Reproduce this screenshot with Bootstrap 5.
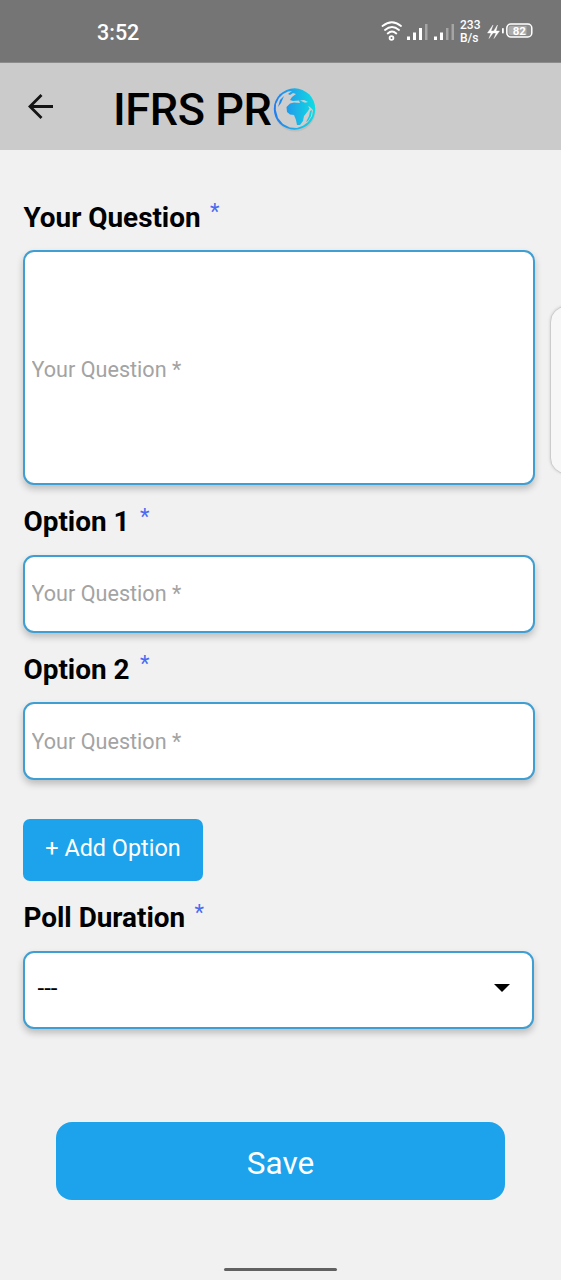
<!DOCTYPE html>
<html lang="en">
<head>
<meta charset="utf-8">
<meta name="viewport" content="width=device-width, initial-scale=1">
<title>IFRS PRO</title>
<link href="https://cdn.jsdelivr.net/npm/bootstrap@5.3.0/dist/css/bootstrap.min.css" rel="stylesheet">
<style>
  body { font-family: Roboto, "Liberation Sans", sans-serif; background: #f1f1f1; color: #000; height: 1280px; overflow: hidden; }
  .status-bar { height: 63px; background: #757575; color: #fff; padding: 0 28px 0 97px; border-bottom: 1px solid #8c8c8c; }
  .clock { font-size: 21.5px; font-weight: 500; line-height: 63px; padding-top: 2px; }
  .net-speed { font-size: 12px; font-weight: 500; line-height: 12.5px; width: 22px; margin-left: 5px; padding-top: 1px; }
  .app-bar { height: 87px; background: #cbcbcb; padding-left: 28px; }
  .app-title { font-size: 45px; font-weight: 500; line-height: 87px; margin: 0 0 0 59px; padding-top: 6px; letter-spacing: -.4px; white-space: nowrap; }
  .globe { margin-top: 7px; }
  .field-label { height: 69.5px; font-size: 27.9px; font-weight: 700; padding: 5px 0 0 .5px; letter-spacing: -.02px; }
  .req { color: #4a6cf0; font-weight: 400; font-size: 22px; margin-left: 9.5px; margin-top: -12px; }
  .req.wide { margin-left: 10.5px; }
  .poll-form { padding: 30.5px 26px 0 23px; }
  .field-box, .field-box:focus { height: 78px; border: 2px solid #3f9fd3; border-radius: 11px; background-color: #fff; box-shadow: 0 4px 7px rgba(0,0,0,.22); font-size: 21.6px; padding: 0 6.5px; }
  .field-box.tall { height: 235px; padding-top: 4px; }
  .field-box::placeholder { color: #a3a3a3; opacity: 1; }
  .duration { width: 511px; font-size: 24px; padding: 0 22.5px 3px 12.5px; }
  .btn-sky, .btn-sky:hover { background: #1ca3ec; color: #fff; border: 0; }
  .add-btn { width: 180px; height: 62px; margin-top: 39px; border-radius: 7px; font-size: 23.4px; padding: 0 0 2px; }
  .save-btn { width: 449px; height: 78px; margin: 93px 0 0 33px; border-radius: 16px; font-size: 31.5px; padding: 6px 0 0; }
  .edge-panel { right: -21px; top: 306px; width: 32px; height: 168px; border-radius: 22px; background: #f7f7f7; border: 1px solid #ccc; box-shadow: 0 0 3px rgba(0,0,0,.15); }
  .home-pill { width: 113px; height: 3px; margin: 68px auto 0; border-radius: 2px; background: #616161; }
</style>
</head>
<body class="position-relative">
<header>
  <div class="status-bar d-flex align-items-center justify-content-between">
    <span class="clock">3:52</span>
    <div class="d-flex align-items-center">
      <svg width="22" height="22" viewBox="0 0 22 22" fill="none" stroke="#fff" stroke-width="1.8" stroke-linecap="round"><path d="M1.5 6Q11-1.500 20 6M4 10Q11 4 18 10M6.700 13.500Q11 9.500 15.300 13.500"/><circle cx="10.500" cy="18" r="1.900"/></svg>
      <svg class="ms-1" width="48" height="18" viewBox="0 0 48 18" fill="#fff"><rect x="0" y="14.500" width="3" height="3.500"/><rect x="6" y="10.500" width="3" height="7.500"/><rect x="12" y="6" width="3" height="12"/><rect x="18" y="2" width="2.500" height="16" opacity=".35"/><rect x="27" y="14.500" width="3" height="3.500"/><rect x="33" y="10.500" width="3" height="7.500"/><rect x="39" y="6" width="2.500" height="12" opacity=".35"/><rect x="44.500" y="2" width="2.500" height="16" opacity=".35"/></svg>
      <span class="net-speed">233<br>B/s</span>
      <svg class="ms-1" width="47" height="18" viewBox="0 0 47 18"><path d="M7 3 1.500 11h3.500L3 16.500 8.500 9H5zM11.500 3 6.500 11H10L8 16.500 13.500 9H10z" fill="#fff" stroke="#fff" stroke-width=".4"/><rect x="16" y="6" width="1.800" height="5.500" rx=".8" fill="#fff"/><rect x="20.800" y="2" width="25" height="13" rx="4" fill="#8b8b8b" stroke="#fff" stroke-width="1.500"/><path d="M24.500 4h16v9h-16a2 2 0 0 1-2-2V6a2 2 0 0 1 2-2z" fill="#aaa"/><text x="33.300" y="12.500" font-size="11.500" font-weight="700" text-anchor="middle" fill="#fff">82</text></svg>
    </div>
  </div>
  <nav class="app-bar d-flex align-items-center">
    <svg width="26" height="26" viewBox="0 0 26 26" fill="none" stroke="#151515" stroke-width="2.800"><path d="M25 12.500H2M13.500 1 2 12.500 13.500 24"/></svg>
    <h1 class="app-title">IFRS PR</h1>
    <svg class="globe" width="46" height="46" viewBox="0 0 46 46">
      <defs><linearGradient id="sea" gradientUnits="userSpaceOnUse" x1="2" y1="0" x2="44" y2="0"><stop stop-color="#207cf2"/><stop offset=".5" stop-color="#1caee8"/><stop offset="1" stop-color="#0ce0e3"/></linearGradient></defs>
      <circle cx="23" cy="24" r="20.500" fill="#999" opacity=".25"/>
      <circle cx="22.500" cy="22" r="20.700" fill="url(#sea)"/>
      <path fill="#cecece" d="M4 17 7 11 11 7 16 4.500 20 4 16 7 18 8 21 6 24 7 20 10 18 13 21 14 27 13.500 28 16 22 15.500 18 16.500 14.500 20 15 25 18 27.500 22 28 24 33 25 38 28 38 31 34 32 29 36 24 37.500 21.500 36 19 38 20 41 23 40 29 36 35 31 38.800 25 41 18 40.500 11 37 6 31 3.800 23z"/>
      <path fill="#cecece" d="M28 13.500l4-.5 4 2-3 .8z"/>
      <path fill="url(#sea)" d="M8 13l4-4-3 7-3 4zM38 24l2-1-1 6-3 5-2 1 3-6z"/>
    </svg>
  </nav>
</header>
<main>
  <form class="poll-form">
    <label class="field-label d-flex align-items-center" for="question">Your Question<span class="req">*</span></label>
    <input id="question" class="form-control field-box tall" placeholder="Your Question *">
    <label class="field-label d-flex align-items-center" for="opt1">Option 1<span class="req wide">*</span></label>
    <input id="opt1" class="form-control field-box" placeholder="Your Question *">
    <label class="field-label d-flex align-items-center" for="opt2">Option 2<span class="req wide">*</span></label>
    <input id="opt2" class="form-control field-box" placeholder="Your Question *">
    <button type="button" class="btn btn-sky add-btn d-block">+ Add Option</button>
    <div class="field-label d-flex align-items-center">Poll Duration<span class="req">*</span></div>
    <div class="field-box duration d-flex align-items-center justify-content-between" role="button">
      <span>---</span>
      <svg width="16" height="8" viewBox="0 0 16 8"><path d="M0 0h16L8 8z"/></svg>
    </div>
    <button type="button" class="btn btn-sky save-btn d-block">Save</button>
  </form>
  <div class="home-pill"></div>
</main>
<div class="edge-panel position-absolute"></div>
<script src="https://cdn.jsdelivr.net/npm/bootstrap@5.3.0/dist/js/bootstrap.bundle.min.js"></script>
</body>
</html>
